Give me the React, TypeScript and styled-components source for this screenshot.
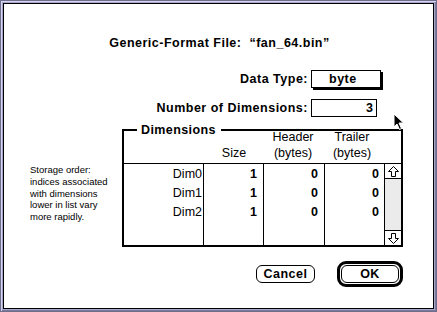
import React from "react";
import styled, { createGlobalStyle } from "styled-components";

const Global = createGlobalStyle`
  html, body { margin: 0; padding: 0; background: #fff; }
  body { font-family: "Liberation Sans", Arial, sans-serif; }
  * { box-sizing: border-box; }
`;

const Frame = styled.div`
  position: relative;
  width: 437px;
  height: 312px;
  border: 1px solid #6e6e8c;
  background: #a8a8cc;
  padding: 2px;
  box-shadow: inset 1px 1px 0 #d4d4f0, inset -1px -1px 0 #7a7a9a;
`;

const Dialog = styled.div`
  width: 100%;
  height: 100%;
  background: #fff;
  border: 1px solid #000;
  display: flex;
  flex-direction: column;
  color: #000;
`;

const Title = styled.div`
  margin-top: 32px;
  text-align: center;
  font-weight: bold;
  font-size: 12.5px;
  line-height: 15px;
  letter-spacing: 0.5px;
  padding-left: 2px;
`;

const Form = styled.div`
  margin-top: 19px;
  display: grid;
  grid-template-columns: 304px auto;
  column-gap: 3px;
  row-gap: 11px;
  align-items: center;
`;

const Label = styled.div`
  text-align: right;
  font-weight: bold;
  font-size: 12.5px;
  letter-spacing: 0.5px;
`;

const Popup = styled.div`
  width: 70px;
  height: 18px;
  border: 1px solid #000;
  box-shadow: 2px 2px 0 #000;
  font-weight: bold;
  font-size: 12.5px;
  line-height: 16px;
  padding-left: 17px;
  letter-spacing: 0.5px;
`;

const Field = styled.div`
  width: 66px;
  height: 18px;
  border: 1px solid #000;
  font-size: 12.5px;
  font-weight: bold;
  line-height: 16px;
  text-align: right;
  padding-right: 3px;
`;

const Middle = styled.div`
  margin-top: 6px;
  display: flex;
  align-items: flex-start;
`;

const Note = styled.div`
  width: 92px;
  margin-left: 26px;
  margin-top: 41px;
  font-size: 9.5px;
  line-height: 11.8px;
`;

const Group = styled.fieldset`
  margin: 0;
  padding: 0;
  width: 281px;
  height: 124px;
  border: 2px solid #000;
  min-inline-size: 0;
`;

const Legend = styled.legend`
  margin-left: 13px;
  padding: 0 5px 0 4px;
  font-weight: bold;
  font-size: 12.5px;
  line-height: 14px;
  letter-spacing: 0.4px;
`;

const Table = styled.div`
  display: grid;
  grid-template-columns: 80px 60px 61px 60px 1fr;
  grid-template-rows: 32px 1fr;
  height: calc(100% + 5px);
  margin-top: -5px;
`;

const HeadCell = styled.div<{ $pr?: number }>`
  display: flex;
  flex-direction: column;
  justify-content: flex-end;
  align-items: center;
  font-size: 12.5px;
  line-height: 15.5px;
  padding-bottom: 2px;
  padding-right: ${(p) => p.$pr ?? 0}px;
  border-bottom: 1px solid #000;
`;

const Column = styled.div<{ $line?: boolean; $bold?: boolean; $pr: number }>`
  display: flex;
  flex-direction: column;
  align-items: flex-end;
  padding-top: 1px;
  padding-right: ${(p) => p.$pr}px;
  border-right: ${(p) => (p.$line ? "1px solid #000" : "none")};
  font-size: 12.5px;
  font-weight: ${(p) => (p.$bold ? "bold" : "normal")};
`;

const Cell = styled.div`
  height: 19px;
  line-height: 19px;
`;

const Scroll = styled.div`
  display: flex;
  flex-direction: column;
  background: #ebebeb;
`;

const ArrowBox = styled.div<{ $top?: boolean }>`
  height: 15px;
  background: #fff;
  display: flex;
  align-items: center;
  justify-content: center;
  border-bottom: ${(p) => (p.$top ? "1px solid #000" : "none")};
  border-top: ${(p) => (p.$top ? "none" : "1px solid #000")};
`;

const Track = styled.div`
  flex: 1;
`;

const Buttons = styled.div`
  margin-top: 14px;
  display: flex;
  align-items: center;
  justify-content: flex-end;
  padding-right: 30px;
  gap: 22px;
`;

const Button = styled.div<{ $w: number }>`
  width: ${(p) => p.$w}px;
  height: 18px;
  border: 1px solid #000;
  border-radius: 6px;
  display: flex;
  align-items: center;
  justify-content: center;
  font-weight: bold;
  font-size: 12.5px;
  letter-spacing: 0.5px;
`;

const DefaultRing = styled.div`
  border: 3px solid #000;
  border-radius: 9px;
  padding: 1px;
`;

const Cursor = styled.svg`
  position: absolute;
  left: 392px;
  top: 112px;
`;

const UpArrow = () => (
  <svg width="11" height="11" viewBox="0 0 11 11">
    <path d="M5.5 0.5 L10.5 5.5 L7.5 5.5 L7.5 10.5 L3.5 10.5 L3.5 5.5 L0.5 5.5 Z" fill="#fff" stroke="#000" strokeWidth="1" />
  </svg>
);

const DownArrow = () => (
  <svg width="11" height="11" viewBox="0 0 11 11">
    <path d="M5.5 10.5 L10.5 5.5 L7.5 5.5 L7.5 0.5 L3.5 0.5 L3.5 5.5 L0.5 5.5 Z" fill="#fff" stroke="#000" strokeWidth="1" />
  </svg>
);

const dims = ["Dim0", "Dim1", "Dim2"];

export default function App() {
  return (
    <>
      <Global />
      <Frame>
        <Dialog>
          <Title>Generic-Format File:&nbsp; “fan_64.bin”</Title>
          <Form>
            <Label>Data Type:</Label>
            <Popup>byte</Popup>
            <Label>Number of Dimensions:</Label>
            <Field>3</Field>
          </Form>
          <Middle>
            <Note>
              Storage order:
              <br />
              indices associated
              <br />
              with dimensions
              <br />
              lower in list vary
              <br />
              more rapidly.
            </Note>
            <Group>
              <Legend>Dimensions</Legend>
              <Table>
                <HeadCell />
                <HeadCell>Size</HeadCell>
                <HeadCell $pr={3}>
                  <span>Header</span>
                  <span>(bytes)</span>
                </HeadCell>
                <HeadCell $pr={6}>
                  <span>Trailer</span>
                  <span>(bytes)</span>
                </HeadCell>
                <HeadCell />
                <Column $line $pr={1}>
                  {dims.map((d) => (
                    <Cell key={d}>{d}</Cell>
                  ))}
                </Column>
                <Column $line $bold $pr={6}>
                  {dims.map((d) => (
                    <Cell key={d}>1</Cell>
                  ))}
                </Column>
                <Column $line $bold $pr={6}>
                  {dims.map((d) => (
                    <Cell key={d}>0</Cell>
                  ))}
                </Column>
                <Column $line $bold $pr={5}>
                  {dims.map((d) => (
                    <Cell key={d}>0</Cell>
                  ))}
                </Column>
                <Scroll>
                  <ArrowBox $top>
                    <UpArrow />
                  </ArrowBox>
                  <Track />
                  <ArrowBox>
                    <DownArrow />
                  </ArrowBox>
                </Scroll>
              </Table>
            </Group>
          </Middle>
          <Buttons>
            <Button $w={59}>Cancel</Button>
            <DefaultRing>
              <Button $w={58}>OK</Button>
            </DefaultRing>
          </Buttons>
        </Dialog>
        <Cursor width="12" height="18" viewBox="0 0 12 18">
          <path d="M1 1 L1 14 L4 11 L6.5 16.5 L8.5 15.5 L6 10 L10.5 10 Z" fill="#000" stroke="#fff" strokeWidth="1" />
        </Cursor>
      </Frame>
    </>
  );
}
